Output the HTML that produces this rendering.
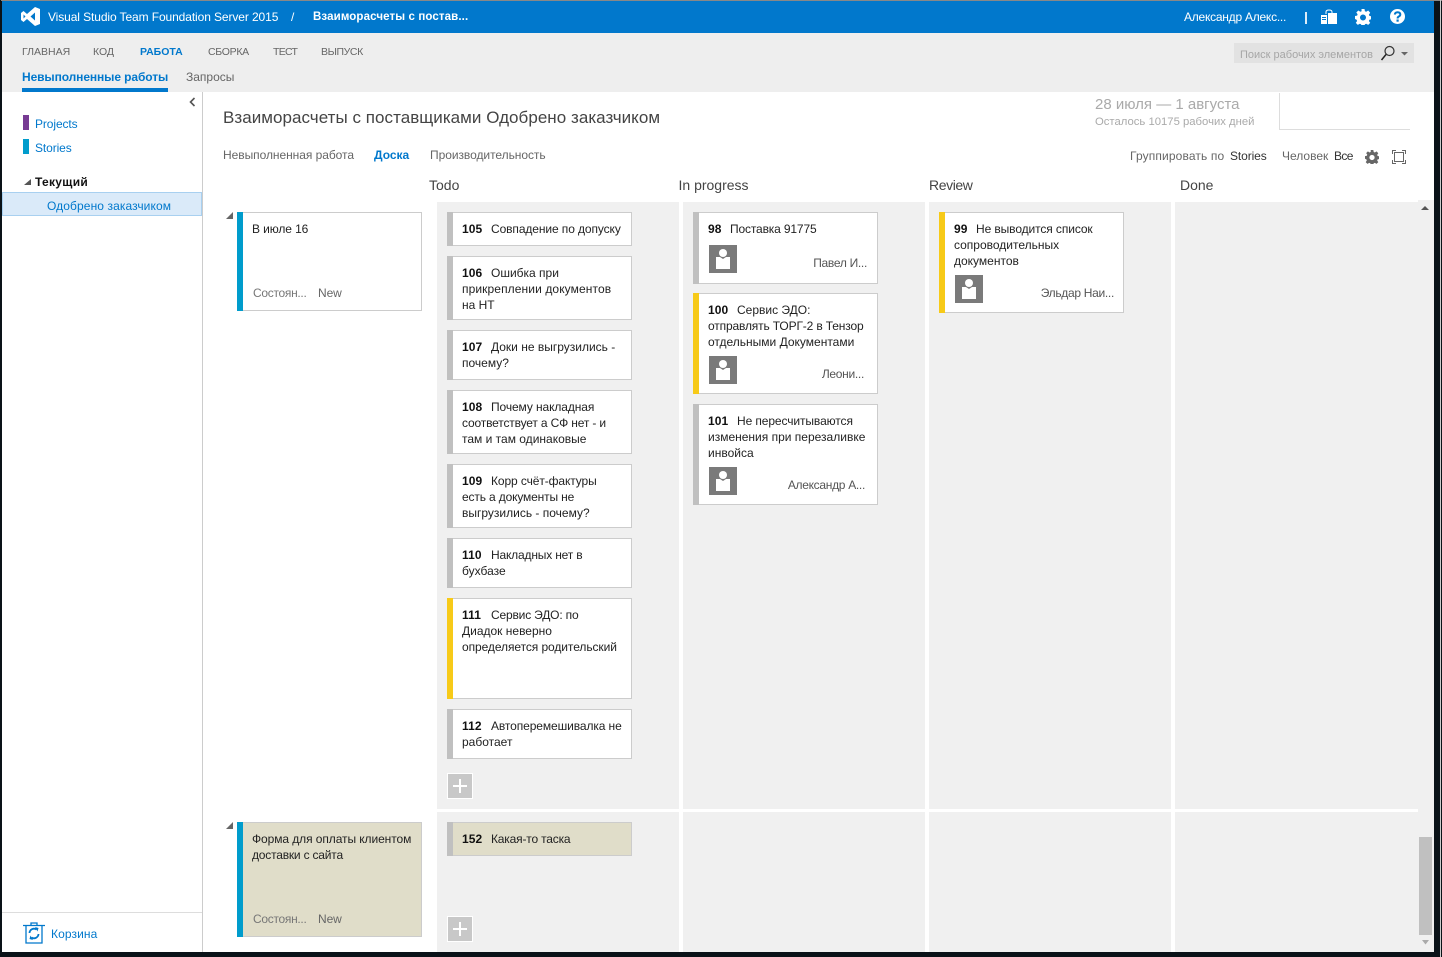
<!DOCTYPE html>
<html lang="ru"><head><meta charset="utf-8"><title>Доска</title>
<style>
html,body{margin:0;padding:0;width:1442px;height:957px;overflow:hidden;background:#0a1218}
body{position:relative;font:12px/16px "Liberation Sans","Noto Sans CJK JP",sans-serif;color:#222}
div,span,svg{position:absolute}
.t{white-space:nowrap}
.b{background:#f0f0f0}
.c{background:#fff;border:1px solid #ccc;box-sizing:border-box;width:185px}
.c:before{content:"";position:absolute;left:-1px;top:-1px;bottom:-1px;width:6px;background:#c0c0c0}
.y:before{background:#f7ca18}
.s:before{background:#009ccc}
.k{background:#e0ddc9}
.c .l{position:absolute;left:14px;white-space:nowrap;color:#222}
.c .m{letter-spacing:-.1px}
.c .m2{letter-spacing:-.18px}
b{font-weight:bold;color:#111;display:inline-block;width:29px;letter-spacing:.1px}
b.w{width:22px}
.c .g{color:#777;letter-spacing:-.3px}
.c .e{color:#666;letter-spacing:-.1px}
.av{left:15px;width:28px;height:28px;background:#7a7a7a}
.n{position:absolute;white-space:nowrap;color:#555;text-align:right;letter-spacing:-.3px}
.plus{width:26px;height:26px;left:447px;background:#c8c8c8;border:1px solid #fff;box-sizing:border-box}
.plus:before{content:"";position:absolute;left:5px;top:11px;width:14px;height:2px;background:#fff}
.plus:after{content:"";position:absolute;left:11px;top:5px;width:2px;height:14px;background:#fff}
.nav{top:44px;color:#666;font-size:10.500px}
.h{top:177px;font-size:14px;color:#444}
</style></head><body>
<div style="left:0;top:0;width:1442px;height:1px;background:#888"></div>
<div style="left:2px;top:1px;width:1432px;height:951px;background:#fff"></div>
<div style="left:1440px;top:0;width:1px;height:957px;background:#ccc"></div>

<div style="left:2px;top:1px;width:1432px;height:32px;background:#0178cc"></div>
<svg style="left:21px;top:7px" width="20" height="19" viewBox="0 0 20 19"><path fill="#fff" d="M14 0l5 2v15l-5 2-8-7-3.500 3L0 13V6l2.500-2L6 7zM14 5.500L9.500 9.500 14 13.500zM2.500 7.500v4L4.500 9.500z"/></svg>
<div class="t" style="left:48px;top:9px;color:#fff;font-size:12px;letter-spacing:-.1px">Visual Studio Team Foundation Server 2015</div>
<div class="t" style="left:291px;top:9px;color:#fff">/</div>
<div class="t" style="left:313px;top:9px;color:#fff;font-weight:bold;font-size:11.500px;letter-spacing:.12px">Взаиморасчеты с постав...</div>
<div class="t" style="left:1184px;top:9px;color:#fff;font-size:12px;letter-spacing:-.24px">Александр Алекс...</div>
<div style="left:1305px;top:12px;width:2px;height:12px;background:#dcecf8"></div>
<svg style="left:1321px;top:9px" width="16" height="16" viewBox="0 0 16 16"><path fill="#fff" d="M0 6h6v9H0zM7 4h9v11H7z"/><path fill="none" stroke="#fff" d="M5 5V3q0-2 3-2t3 2v2"/><path fill="#0178cc" d="M1 8h4v1H1zM1 10h4v1H1z"/></svg>
<svg style="left:1355px;top:9px" width="16" height="16" viewBox="0 0 16 16"><path fill="#fff" fill-rule="evenodd" d="M6.500 0h3l.4 2.200 1.300.6L13.200 1.500l2 2.200-1.300 1.900.5 1.300 2.100.4v3l-2.100.4-.5 1.300 1.300 1.900-2 2-2-1.200-1.300.5-.4 2.200h-3l-.4-2.200-1.300-.5-2 1.200-2-2 1.300-1.900-.5-1.300L0 10V7l2.100-.4.500-1.300L1.300 3.500l2-2 2 1.300 1.300-.6zM8 5.500a3 3 0 1 0 0 6 3 3 0 0 0 0-6z"/></svg>
<svg style="left:1390px;top:9px" width="15" height="15" viewBox="0 0 15 15"><circle cx="7.500" cy="7.500" r="7.500" fill="#fff"/><path fill="none" stroke="#0178cc" stroke-width="2" d="M4.800 5.600Q5 3.200 7.600 3.200 10.300 3.300 10.300 5.400 10.300 6.800 8.800 7.500 7.600 8.100 7.600 9.500"/><rect x="6.500" y="10.500" width="2.200" height="2.200" fill="#0178cc"/></svg>

<div style="left:2px;top:33px;width:1432px;height:59px;background:#eee"></div>
<div class="t nav" style="left:22px">ГЛАВНАЯ</div>
<div class="t nav" style="left:93px">КОД</div>
<div class="t nav" style="left:140px;color:#0178cc;font-weight:bold">РАБОТА</div>
<div class="t nav" style="left:208px;letter-spacing:-.3px">СБОРКА</div>
<div class="t nav" style="left:273px;letter-spacing:-.7px">ТЕСТ</div>
<div class="t nav" style="left:321px;letter-spacing:-.4px">ВЫПУСК</div>
<div class="t" style="left:22px;top:69px;color:#0178cc;font-weight:bold;font-size:12px;letter-spacing:-.1px">Невыполненные работы</div>
<div style="left:22px;top:88px;width:146px;height:4px;background:#0178cc"></div>
<div class="t" style="left:186px;top:69px;color:#666">Запросы</div>
<div style="left:1234px;top:43px;width:180px;height:20px;background:#e2e2e2"></div>
<div class="t" style="left:1240px;top:47px;color:#a6a6a6;font-size:11px">Поиск рабочих элементов</div>
<svg style="left:1380px;top:45px" width="30" height="17" viewBox="0 0 30 17"><circle cx="9.500" cy="6" r="4.500" fill="none" stroke="#333" stroke-width="1.200"/><path d="M6 9.500L1.500 15" stroke="#222" stroke-width="1.500"/><path d="M21 7h7l-3.500 3.500z" fill="#666"/></svg>

<div style="left:202px;top:92px;width:1px;height:860px;background:#ccc"></div>
<svg style="left:189px;top:97px" width="7" height="10" viewBox="0 0 7 10"><path d="M5.500 1L1.500 5l4 4" fill="none" stroke="#555" stroke-width="1.600"/></svg>
<div style="left:23px;top:115px;width:6px;height:15px;background:#773b93"></div>
<div class="t" style="left:35px;top:116px;color:#0178cc;letter-spacing:-.1px">Projects</div>
<div style="left:23px;top:139px;width:6px;height:15px;background:#009ccc"></div>
<div class="t" style="left:35px;top:140px;color:#0178cc;letter-spacing:-.1px">Stories</div>
<svg style="left:24px;top:178px" width="7" height="8"><path d="M7 1v6H0z" fill="#555"/></svg>
<div class="t" style="left:35px;top:174px;font-weight:bold;color:#111;letter-spacing:.3px">Текущий</div>
<div style="left:2px;top:192px;width:200px;height:24px;box-sizing:border-box;background:#daeaf9;border:1px solid #a8d0f0"></div>
<div class="t" style="left:47px;top:198px;color:#0178cc;letter-spacing:.1px">Одобрено заказчиком</div>
<div style="left:2px;top:912px;width:200px;height:1px;background:#ddd"></div>
<svg style="left:23px;top:922px" width="22" height="22" viewBox="0 0 22 22"><path d="M0 3.500h22M8 3V1h6v2M3 4v17h16V4" fill="none" stroke="#0178cc" stroke-width="1.300"/><path d="M6.500 11a4.500 4.500 0 0 1 7-3.500M15.500 12a4.500 4.500 0 0 1-7 3.500" fill="none" stroke="#0178cc" stroke-width="1.800"/><path d="M12 5l3.500 1-1 3.500zM10 18l-3.500-1 1-3.500z" fill="#0178cc"/></svg>
<div class="t" style="left:51px;top:926px;color:#0178cc;letter-spacing:.1px">Корзина</div>

<div class="t" style="left:223px;top:107px;font-size:17px;line-height:22px;color:#444;letter-spacing:.04px">Взаиморасчеты с поставщиками Одобрено заказчиком</div>
<div class="t" style="left:1095px;top:96px;font-size:15px;line-height:18px;color:#aaa">28 июля — 1 августа</div>
<div class="t" style="left:1095px;top:114px;color:#aaa;font-size:11.300px">Осталось 10175 рабочих дней</div>
<div style="left:1279px;top:93px;width:1px;height:37px;background:#ddd"></div>
<div style="left:1279px;top:129px;width:131px;height:1px;background:#ddd"></div>
<div class="t" style="left:223px;top:147px;color:#666;letter-spacing:-.05px">Невыполненная работа</div>
<div class="t" style="left:374px;top:147px;color:#0178cc;font-weight:bold">Доска</div>
<div class="t" style="left:430px;top:147px;color:#666;letter-spacing:-.05px">Производительность</div>
<div class="t" style="left:1130px;top:148px;color:#666;letter-spacing:.13px">Группировать по</div>
<div class="t" style="left:1230px;top:148px;color:#333;letter-spacing:-.1px">Stories</div>
<div class="t" style="left:1282px;top:148px;color:#666">Человек</div>
<div class="t" style="left:1334px;top:148px;color:#333;letter-spacing:-.6px">Все</div>
<svg style="left:1365px;top:150px" width="14" height="14" viewBox="0 0 16 16"><path fill="#666" fill-rule="evenodd" d="M6.500 0h3l.4 2.200 1.300.6L13.200 1.500l2 2.200-1.300 1.900.5 1.300 2.100.4v3l-2.100.4-.5 1.300 1.300 1.900-2 2-2-1.200-1.300.5-.4 2.200h-3l-.4-2.200-1.300-.5-2 1.200-2-2 1.300-1.900-.5-1.300L0 10V7l2.100-.4.500-1.300L1.300 3.500l2-2 2 1.300 1.300-.6zM8 5.500a3 3 0 1 0 0 6 3 3 0 0 0 0-6z"/></svg>
<svg style="left:1392px;top:150px" width="14" height="14" viewBox="0 0 14 14"><path d="M.5 4V.5H4M10 .5h3.500V4M13.500 10v3.500H10M4 13.500H.5V10" fill="none" stroke="#666"/><rect x="2.500" y="2.500" width="9" height="9" fill="none" stroke="#666"/></svg>

<div class="t h" style="left:429px">Todo</div>
<div class="t h" style="left:678.500px">In progress</div>
<div class="t h" style="left:929px;letter-spacing:-.4px">Review</div>
<div class="t h" style="left:1180px">Done</div>

<div class="b" style="left:437px;top:202px;width:242px;height:607px"></div>
<div class="b" style="left:683px;top:202px;width:242px;height:607px"></div>
<div class="b" style="left:929px;top:202px;width:242px;height:607px"></div>
<div class="b" style="left:1175px;top:202px;width:243px;height:607px"></div>
<div class="b" style="left:437px;top:812px;width:242px;height:140px"></div>
<div class="b" style="left:683px;top:812px;width:242px;height:140px"></div>
<div class="b" style="left:929px;top:812px;width:242px;height:140px"></div>
<div class="b" style="left:1175px;top:812px;width:243px;height:140px"></div>
<div class="b" style="left:1418px;top:200px;width:16px;height:752px"></div>
<div style="left:1419px;top:837px;width:13px;height:98px;background:#c0c0c0"></div>
<svg style="left:1421px;top:206px" width="8" height="5"><path d="M0 4h8L4 0z" fill="#555"/></svg>
<svg style="left:1422px;top:940px" width="8" height="5"><path d="M0 0h7L3.500 4.500z" fill="#aaa"/></svg>

<svg style="left:226px;top:212px" width="7" height="7"><path d="M7 0v7H0z" fill="#666"/></svg>
<div class="c s" style="left:237px;top:212px;height:99px"><span class="l" style="top:8px;letter-spacing:-.1px">В июле 16</span><span class="l g" style="top:72px;left:15px">Состоян...</span><span class="l e" style="top:72px;left:80px">New</span></div>
<svg style="left:226px;top:822px" width="7" height="7"><path d="M7 0v7H0z" fill="#666"/></svg>
<div class="c s k" style="left:237px;top:822px;height:115px"><span class="l" style="top:8px;letter-spacing:-.08px">Форма для оплаты клиентом</span><span class="l" style="top:24px;letter-spacing:-.2px">доставки с сайта</span><span class="l g" style="top:88px;left:15px">Состоян...</span><span class="l e" style="top:88px;left:80px">New</span></div>

<div class="c" style="left:447px;top:212px;height:34px"><span class="l m" style="top:8px"><b>105</b>Совпадение по допуску</span></div>
<div class="c" style="left:447px;top:256px;height:64px"><span class="l" style="top:8px"><b>106</b>Ошибка при</span><span class="l" style="top:24px;letter-spacing:.1px">прикреплении документов</span><span class="l" style="top:40px">на НТ</span></div>
<div class="c" style="left:447px;top:330px;height:50px"><span class="l" style="top:8px"><b>107</b>Доки не выгрузились -</span><span class="l" style="top:24px">почему?</span></div>
<div class="c" style="left:447px;top:390px;height:64px"><span class="l m" style="top:8px"><b>108</b>Почему накладная</span><span class="l" style="top:24px;letter-spacing:-.16px">соответствует а СФ нет - и</span><span class="l" style="top:40px">там и там одинаковые</span></div>
<div class="c" style="left:447px;top:464px;height:64px"><span class="l m" style="top:8px"><b>109</b>Корр счёт-фактуры</span><span class="l" style="top:24px;letter-spacing:-.15px">есть а документы не</span><span class="l" style="top:40px">выгрузились - почему?</span></div>
<div class="c" style="left:447px;top:538px;height:50px"><span class="l m2" style="top:8px"><b>110</b>Накладных нет в</span><span class="l" style="top:24px">бухбазе</span></div>
<div class="c y" style="left:447px;top:598px;height:101px"><span class="l m2" style="top:8px"><b>111</b>Сервис ЭДО: по</span><span class="l" style="top:24px">Диадок неверно</span><span class="l" style="top:40px;letter-spacing:-.08px">определяется родительский</span></div>
<div class="c" style="left:447px;top:709px;height:50px"><span class="l m" style="top:8px"><b>112</b>Автоперемешивалка не</span><span class="l" style="top:24px">работает</span></div>
<div class="plus" style="top:773px"></div>
<div class="c k" style="left:447px;top:822px;height:34px"><span class="l m2" style="top:8px"><b>152</b>Какая-то таска</span></div>
<div class="plus" style="top:916px"></div>

<div class="c" style="left:693px;top:212px;height:72px"><span class="l" style="top:8px;letter-spacing:-.15px"><b class="w">98</b>Поставка 91775</span><span class="av" style="top:32px"><svg style="left:7px;top:3px" width="14" height="22"><circle cx="7" cy="5" r="4" fill="#fff"/><path d="M0 9h4l3 2 3-2h4v12H0z" fill="#fff"/></svg></span><span class="n" style="right:10px;top:42px">Павел И...</span></div>
<div class="c y" style="left:693px;top:293px;height:101px"><span class="l" style="top:8px"><b>100</b>Сервис ЭДО:</span><span class="l" style="top:24px;letter-spacing:-.15px">отправлять ТОРГ-2 в Тензор</span><span class="l" style="top:40px">отдельными Документами</span><span class="av" style="top:62px"><svg style="left:7px;top:3px" width="14" height="22"><circle cx="7" cy="5" r="4" fill="#fff"/><path d="M0 9h4l3 2 3-2h4v12H0z" fill="#fff"/></svg></span><span class="n" style="right:13px;top:72px">Леони...</span></div>
<div class="c" style="left:693px;top:404px;height:101px"><span class="l m" style="top:8px"><b>101</b>Не пересчитываются</span><span class="l" style="top:24px">изменения при перезаливке</span><span class="l" style="top:40px">инвойса</span><span class="av" style="top:62px"><svg style="left:7px;top:3px" width="14" height="22"><circle cx="7" cy="5" r="4" fill="#fff"/><path d="M0 9h4l3 2 3-2h4v12H0z" fill="#fff"/></svg></span><span class="n" style="right:12px;top:72px">Александр А...</span></div>

<div class="c y" style="left:939px;top:212px;height:101px"><span class="l m" style="top:8px"><b class="w">99</b>Не выводится список</span><span class="l" style="top:24px">сопроводительных</span><span class="l" style="top:40px">документов</span><span class="av" style="top:62px"><svg style="left:7px;top:3px" width="14" height="22"><circle cx="7" cy="5" r="4" fill="#fff"/><path d="M0 9h4l3 2 3-2h4v12H0z" fill="#fff"/></svg></span><span class="n" style="right:9px;top:72px">Эльдар Наи...</span></div>

<div style="left:0;top:0;width:1px;height:957px;background:#0a1218"></div>
</body></html>
